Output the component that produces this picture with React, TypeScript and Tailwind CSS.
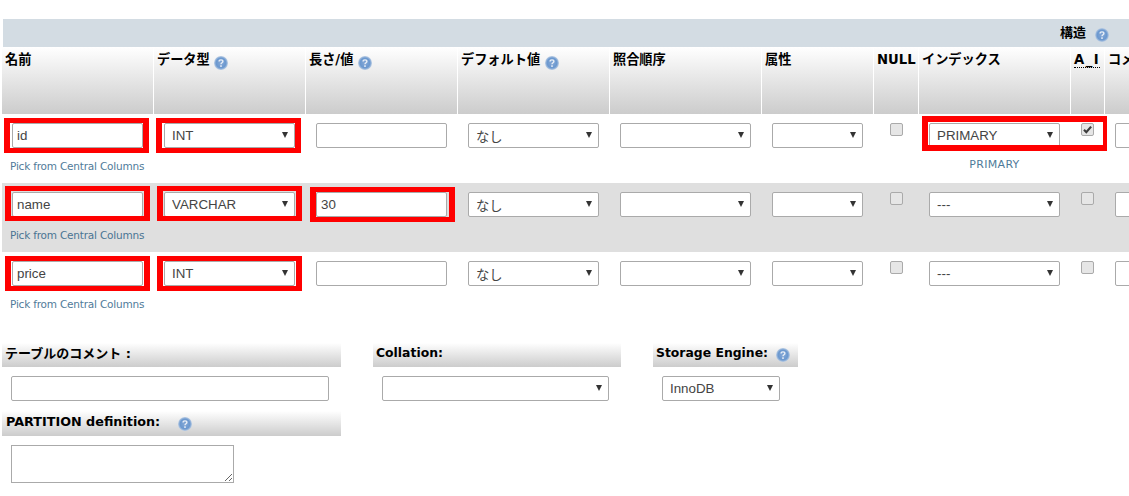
const fieldTypes = ['INT', 'VARCHAR', 'TEXT', 'DATE'];

const columns = 'grid grid-cols-[152px_152px_152px_152px_152px_112px_45px_152px_34px_60px]';
const cjk = "font-['DejaVu_Sans','Noto_Sans_CJK_JP',sans-serif]";
const headCell = `h-[67px] border-r border-white bg-gradient-to-b from-[#ffffff] to-[#cccccc] pl-[3px] pt-[4px] text-[13.2px] leading-[18px] font-bold text-black ${cjk}`;
const sectionHead = `flex h-[24px] items-center bg-gradient-to-b from-[#ffffff] to-[#cccccc] pb-[3px] pl-[3px] text-[12.4px] font-bold text-black ${cjk}`;
const control = "block h-[25px] rounded-[2px] border border-[#aaaaaa] bg-white text-[13.33px] text-[#444444] font-['Liberation_Sans','Noto_Sans_CJK_JP',sans-serif] outline-none";
const pickLink = "whitespace-nowrap text-[#235a81] opacity-80 font-['DejaVu_Sans',sans-serif]";

function HelpIcon({ className = '' }: { className?: string }) {
  return (
    <svg width="14" height="14" viewBox="0 0 14 14" className={`inline-block shrink-0 ${className}`}>
      <defs>
        <radialGradient id="helpFill" cx="50%" cy="50%" r="50%">
          <stop offset="0%" stopColor="#86a9d6" />
          <stop offset="70%" stopColor="#6b98cf" />
          <stop offset="100%" stopColor="#bccee4" />
        </radialGradient>
      </defs>
      <circle cx="7" cy="7" r="7" fill="url(#helpFill)" />
      <path d="M5.1 5.6c0-1 .8-1.7 1.9-1.7s1.9.7 1.9 1.6c0 1.3-1.9 1.3-1.9 2.7" fill="none" stroke="#e8eef6" strokeWidth="1.4" />
      <rect x="6.2" y="9.3" width="1.6" height="1.6" fill="#e8eef6" />
    </svg>
  );
}

function RedBox({ className, children }: { className: string; children: React.ReactNode }) {
  return (
    <div className="relative w-fit">
      {children}
      <div className={`pointer-events-none absolute border-[#ff0000] ${className}`} />
    </div>
  );
}

function TextBox({ value = '', width = 'w-[131px]' }: { value?: string; width?: string }) {
  return <input readOnly value={value} className={`${control} ${width} px-[4px]`} />;
}

function Arrow() {
  return (
    <svg width="6" height="6" viewBox="0 0 6 6" className="pointer-events-none absolute right-[7px] top-[9px]">
      <polygon points="0,0 6,0 3,6" fill="#333333" />
    </svg>
  );
}

function Select({ value = '', width = 'w-[131px]' }: { value?: string; width?: string }) {
  return (
    <div className="relative w-fit">
      <select defaultValue={value} className={`${control} ${width} appearance-none pl-[7px]`}>
        <option value="">{''}</option>
        {fieldTypes.map((t) => (
          <option key={t}>{t}</option>
        ))}
        <option>PRIMARY</option>
        <option>---</option>
        <option>InnoDB</option>
      </select>
      <Arrow />
    </div>
  );
}

function Check({ checked = false }: { checked?: boolean }) {
  return (
    <div className="relative h-[13px] w-[13px]">
      <input
        type="checkbox"
        readOnly
        checked={checked}
        className="block h-[13px] w-[13px] appearance-none rounded-[2px] border border-[#aaaaaa] bg-[#e6e6e6]"
      />
      {checked && (
        <svg width="13" height="13" viewBox="0 0 13 13" className="pointer-events-none absolute left-0 top-0">
          <path d="M3 6.8l2.3 2.4 4.8-5.6" fill="none" stroke="#3c3c3c" strokeWidth="2.2" />
        </svg>
      )}
    </div>
  );
}

function Cell({ children, className = 'pl-[10px]' }: { children?: React.ReactNode; className?: string }) {
  return <div className={`pt-[9px] ${className}`}>{children}</div>;
}

const rows = [
  {
    name: 'id', type: 'INT', length: '', index: 'PRIMARY', ai: true, bg: 'bg-white',
    box: '-left-[8px] -right-[6px] -top-[5px] -bottom-[5px] border-x-[6px] border-y-[5px]',
  },
  {
    name: 'name', type: 'VARCHAR', length: '30', index: '---', ai: false, bg: 'bg-[#dfdfdf]',
    box: '-left-[7px] -right-[7px] -top-[6px] -bottom-[4px] border-x-[6px] border-y-[5px]',
  },
  {
    name: 'price', type: 'INT', length: '', index: '---', ai: false, bg: 'bg-white',
    box: '-left-[7px] -right-[7px] -top-[5px] -bottom-[5px] border-x-[6px] border-y-[5px]',
  },
];

export default function App() {
  return (
    <div className="h-[496px] w-[1129px] overflow-hidden bg-white pt-[19px] pl-[2px]">
      <div className={`ml-[1px] flex h-[28px] w-[1126px] items-center justify-end bg-[#d3dce3] pr-[20px] text-[13px] font-bold text-black ${cjk}`}>
        構造
        <HelpIcon className="ml-[9px] mt-[4px]" />
      </div>

      <div className={columns}>
        <div className={headCell}>名前</div>
        <div className={headCell}>データ型 <HelpIcon className="align-[-6px]" /></div>
        <div className={headCell}>長さ/値 <HelpIcon className="align-[-6px]" /></div>
        <div className={headCell}>デフォルト値 <HelpIcon className="align-[-6px]" /></div>
        <div className={headCell}>照合順序</div>
        <div className={headCell}>属性</div>
        <div className={`${headCell} whitespace-nowrap`}>NULL</div>
        <div className={headCell}>インデックス</div>
        <div className={`${headCell} whitespace-nowrap`}>
          <span className="border-b border-dotted border-black tracking-[1.5px]">A_I</span>
        </div>
        <div className={`${headCell} whitespace-nowrap`}>コメント</div>
      </div>

      {rows.map((row) => (
        <div key={row.name} className={`${columns} h-[69px] ${row.bg}`}>
          <Cell>
            <RedBox className={row.box}>
              <TextBox value={row.name} />
            </RedBox>
            <a className={`${pickLink} -ml-[2px] mt-[10px] block text-[10.5px] leading-[16px] tracking-[-0.2px]`}>
              Pick from Central Columns
            </a>
          </Cell>
          <Cell>
            <RedBox className={row.box}>
              <Select value={row.type} />
            </RedBox>
          </Cell>
          <Cell>
            {row.length ? (
              <RedBox className="-left-[6px] -right-[8px] -top-[5px] -bottom-[5px] border-x-[6px] border-y-[5px]">
                <TextBox value={row.length} />
              </RedBox>
            ) : (
              <TextBox />
            )}
          </Cell>
          <Cell>
            <div className="relative w-fit">
              <select defaultValue="なし" className={`${control} w-[131px] appearance-none pl-[7px] pt-[4px]`}>
                <option>なし</option>
              </select>
              <Arrow />
            </div>
          </Cell>
          <Cell><Select /></Cell>
          <Cell><Select width="w-[91px]" /></Cell>
          <Cell className="pl-[16px]"><Check /></Cell>
          <Cell>
            {row.ai ? (
              <RedBox className="-left-[7px] -right-[47px] -top-[7px] -bottom-[3px] border-y-[6px] border-l-[6px] border-r-[4px]">
                <Select value={row.index} />
              </RedBox>
            ) : (
              <Select value={row.index} />
            )}
            {row.ai && (
              <div className={`${pickLink} mt-[9px] w-[131px] text-center text-[11px] leading-[16px] tracking-[0.3px]`}>PRIMARY</div>
            )}
          </Cell>
          <Cell><Check checked={row.ai} /></Cell>
          <Cell><TextBox width="w-[60px]" /></Cell>
        </div>
      ))}

      <div className="mt-[22px] flex">
        <div className="w-[339px]">
          <div className={`${sectionHead} text-[13px]`}>テーブルのコメント :</div>
          <div className="pl-[9px] pt-[9px]"><TextBox width="w-[318px]" /></div>
          <div className={`${sectionHead} mt-[10px] h-[25px] pb-[1px] pl-[4px] text-[12.75px]`}>
            PARTITION definition:
            <HelpIcon className="ml-[18px] mt-[3px]" />
          </div>
          <div className="pl-[9px] pt-[9px]">
            <textarea readOnly className={`${control} h-[38px] w-[223px] rounded-none`} />
          </div>
        </div>
        <div className="ml-[32px] w-[248px]">
          <div className={sectionHead}>Collation:</div>
          <div className="pl-[9px] pt-[9px]"><Select width="w-[227px]" /></div>
        </div>
        <div className="ml-[32px] w-[145px]">
          <div className={sectionHead}>
            Storage Engine:
            <HelpIcon className="ml-[8px] mt-[3px]" />
          </div>
          <div className="pl-[9px] pt-[9px]"><Select value="InnoDB" width="w-[118px]" /></div>
        </div>
      </div>
    </div>
  );
}
